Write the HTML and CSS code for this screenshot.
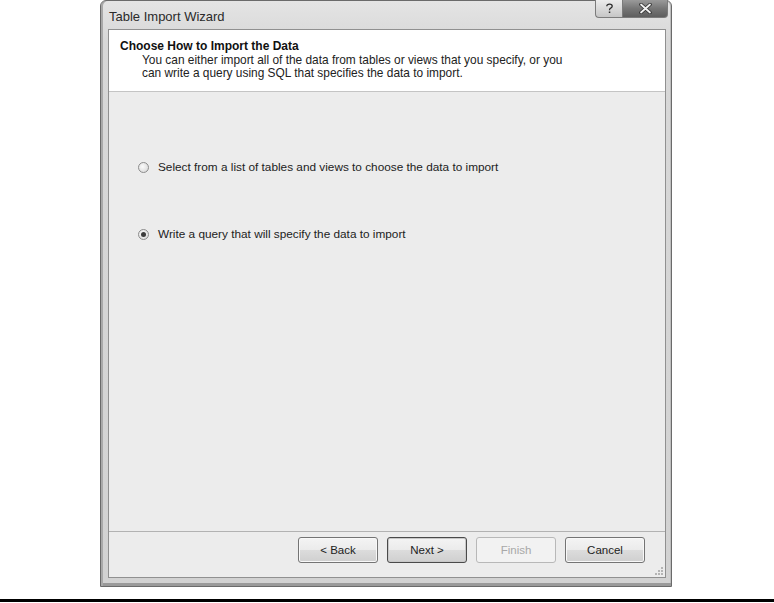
FILE: index.html
```html
<!DOCTYPE html>
<html>
  <head>
    <meta name="viewport" content="width=device-width,initial-scale=1.0" />
    <title>Table Import Wizard</title>
    <link rel="stylesheet" href="styles.css">
  </head>

  <body>
    <div class="figure">
      <div class="window">
        <div class="titlebar">
          <span class="title">Table Import Wizard</span>
          <div class="caption-buttons">
            <span class="cap-help">
              <svg width="9" height="11" viewBox="0 0 9 11">
                <path d="M1.8 3.2 Q1.8 1.2 4.5 1.2 Q7.2 1.2 7.2 3.2 Q7.2 4.6 5.4 5.3 Q4.5 5.8 4.5 7.2" fill="none" stroke="#2a2a2a" stroke-width="1.3" />
                <rect x="3.8" y="8.5" width="1.5" height="1.5" fill="#2a2a2a" />
              </svg>
            </span>
            <span class="cap-close">
              <svg width="13" height="11" viewBox="0 0 13 11">
                <path d="M2 1.5 L11 9.5 M11 1.5 L2 9.5" stroke="#333" stroke-width="3.6" stroke-linecap="round" />
                <path d="M2 1.5 L11 9.5 M11 1.5 L2 9.5" stroke="#f2f2f2" stroke-width="1.8" stroke-linecap="round" />
              </svg>
            </span>
          </div>
        </div>

        <div class="panel">
          <div class="header">
            <h1>Choose How to Import the Data</h1>
            <p>
              You can either import all of the data from tables or views that you specify, or you<br />
              can write a query using SQL that specifies the data to import.
            </p>
          </div>

          <div class="content">
            <label class="option">
              <span class="radio"></span>
              Select from a list of tables and views to choose the data to import
            </label>
            <label class="option">
              <span class="radio checked"></span>
              Write a query that will specify the data to import
            </label>
          </div>

          <div class="footer">
            <button class="btn">&lt; Back</button>
            <button class="btn btn-default">Next &gt;</button>
            <button class="btn" disabled>Finish</button>
            <button class="btn">Cancel</button>
            <svg class="grip" width="10" height="10" viewBox="0 0 10 10">
              <rect x="7" y="1" width="2" height="2" fill="#b4b4b4" />
              <rect x="4" y="4" width="2" height="2" fill="#b4b4b4" />
              <rect x="7" y="4" width="2" height="2" fill="#b4b4b4" />
              <rect x="1" y="7" width="2" height="2" fill="#b4b4b4" />
              <rect x="4" y="7" width="2" height="2" fill="#b4b4b4" />
              <rect x="7" y="7" width="2" height="2" fill="#b4b4b4" />
            </svg>
          </div>
        </div>
      </div>
    </div>
    <div class="rule"></div>
  </body>
</html>
```

FILE: styles.css
```css
body {
  margin: 0;
  background: #fff;
  font-family: "Liberation Sans", Arial, sans-serif;
  color: #222;
}

.figure {
  padding-left: 100px;
}

.window {
  width: 572px;
  height: 587px;
  box-sizing: border-box;
  display: flex;
  flex-direction: column;
  padding: 0 5px 8px 7px;
  border: 1px solid #6a6a6a;
  border-radius: 6px 6px 0 0;
  background: linear-gradient(#e4e4e4, #d8d8d8 40px, #d2d2d2);
  box-shadow: inset 2px 0 #a9a9a9, inset 0 -3px #9a9a9a, inset -1px 0 #bdbdbd;
}

.titlebar {
  height: 28px;
  display: flex;
  justify-content: space-between;
  align-items: flex-start;
}

.title {
  padding: 8px 0 0 1px;
  font-size: 13px;
  line-height: 15px;
  color: #2a2a2a;
}

.caption-buttons {
  display: flex;
  margin-right: -2px;
  margin-top: -1px;
}

.cap-help,
.cap-close {
  height: 18px;
  display: flex;
  align-items: center;
  justify-content: center;
  box-sizing: border-box;
  border: 1px solid #7b7b7b;
  border-top: none;
}

.cap-help {
  width: 27px;
  border-radius: 0 0 0 4px;
  border-right: none;
  background: linear-gradient(#ececec, #d9d9d9 50%, #c6c6c6);
}

.cap-close {
  width: 46px;
  border-radius: 0 0 4px 0;
  background: linear-gradient(#9a9a9a, #767676 50%, #5e5e5e);
}

.panel {
  flex: 1;
  display: flex;
  flex-direction: column;
  border: 1px solid #909090;
  background: #ececec;
  position: relative;
}

.header {
  height: 62px;
  padding: 9px 0 0 11px;
  box-sizing: border-box;
  background: #fff;
  border-bottom: 1px solid #c4c4c4;
}

.header h1 {
  margin: 0;
  font-size: 12px;
  line-height: 14px;
  color: #111;
}

.header p {
  margin: 1px 0 0 22px;
  font-size: 11.9px;
  line-height: 13px;
}

.content {
  flex: 1;
  display: flex;
  flex-direction: column;
  gap: 53px;
  padding: 68px 0 0 29px;
}

.option {
  display: flex;
  align-items: center;
  font-size: 11.8px;
  line-height: 14px;
}

.radio {
  width: 11px;
  height: 11px;
  box-sizing: border-box;
  margin-right: 9px;
  border: 1px solid #8c8c8c;
  border-radius: 50%;
  background: radial-gradient(circle at 40% 40%, #fafafa, #d4d4d4);
  display: flex;
  align-items: center;
  justify-content: center;
}

.radio.checked::after {
  content: "";
  width: 5px;
  height: 5px;
  border-radius: 50%;
  background: #3c3c3c;
}

.footer {
  height: 46px;
  box-sizing: border-box;
  display: flex;
  justify-content: flex-end;
  align-items: flex-start;
  gap: 9px;
  padding: 5px 20px 0 0;
  border-top: 1px solid #b2b2b2;
}

.btn {
  width: 80px;
  height: 26px;
  padding: 0;
  font-family: inherit;
  font-size: 11.5px;
  color: #222;
  border: 1px solid #747474;
  border-radius: 3px;
  background: linear-gradient(#f4f4f4, #ebebeb 50%, #dcdcdc 51%, #cfcfcf);
  box-shadow: inset 0 0 0 1px #f8f8f8;
}

.btn-default {
  border-color: #4a4a4a;
  box-shadow: inset 0 0 0 1px #c8c8c8;
}

.btn:disabled {
  color: #a8a8a8;
  border-color: #b8b8b8;
  background: #f2f2f2;
  box-shadow: none;
}

.grip {
  position: absolute;
  right: 1px;
  bottom: 1px;
}

.rule {
  margin-top: 12px;
  height: 3px;
  background: #000;
}
```
